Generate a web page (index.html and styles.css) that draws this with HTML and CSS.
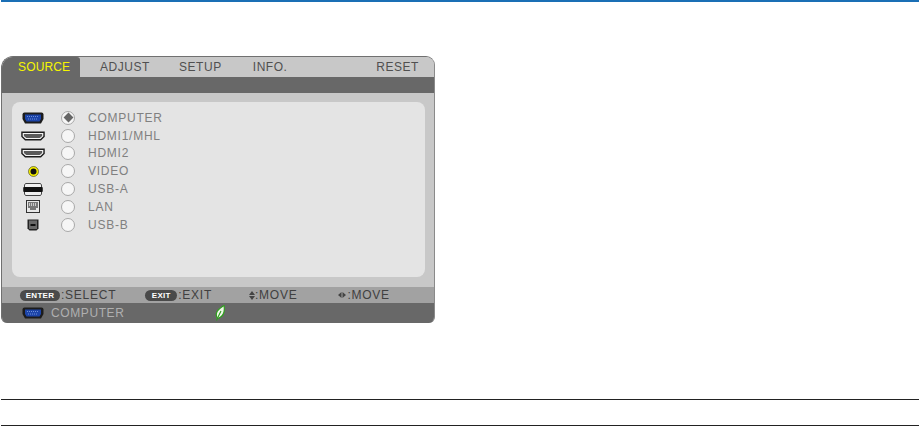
FILE: index.html
```html
<!DOCTYPE html>
<html lang="en">
<head>
  <meta charset="UTF-8" />
  <title>Source menu</title>
  <link rel="stylesheet" href="styles.css">
</head>
<body>
  <svg class="defs" width="0" height="0">
    <symbol id="vga" viewBox="0 0 22 12">
      <path d="M2.500 .5H19.500Q21.500 .5 21.500 2.500V7L19 11.500H3L.5 7V2.500Q.5 .5 2.500 .5Z" fill="#1c1c1c"/>
      <path d="M3 2.500H19V7L17.500 9.500H4.500L3 7Z" fill="#1c44a8"/>
      <path d="M5 4.500H17M6 7H16" stroke="#6f8fd8" stroke-width="1" stroke-dasharray="1 1"/>
    </symbol>
    <symbol id="hdmi" viewBox="0 0 25 10">
      <path d="M1 1H24V5.500L20.500 9H4.500L1 5.500Z" fill="#f4f4f4" stroke="#1c1c1c" stroke-width="1.500"/>
      <path d="M3 3H22V5L19.500 7H5.500L3 5Z" fill="#5a5a5a"/>
    </symbol>
  </svg>

  <div class="top-line"></div>

  <!-- Projector on-screen menu -->
  <div class="osd">
    <div class="tabs">
      <div class="tab tab-active">SOURCE</div>
      <div class="tab tab-adjust">ADJUST</div>
      <div class="tab tab-setup">SETUP</div>
      <div class="tab tab-info">INFO.</div>
      <div class="tab tab-reset">RESET</div>
    </div>
    <div class="band"></div>

    <div class="body">
      <div class="panel">
        <div class="row">
          <span class="icon"><svg class="ic-vga"><use href="#vga"/></svg></span>
          <span class="radio radio-on"></span>
          <span class="label">COMPUTER</span>
        </div>
        <div class="row">
          <span class="icon"><svg class="ic-hdmi"><use href="#hdmi"/></svg></span>
          <span class="radio"></span>
          <span class="label">HDMI1/MHL</span>
        </div>
        <div class="row">
          <span class="icon"><svg class="ic-hdmi"><use href="#hdmi"/></svg></span>
          <span class="radio"></span>
          <span class="label">HDMI2</span>
        </div>
        <div class="row">
          <span class="icon">
            <svg width="11" height="11" viewBox="0 0 11 11">
              <circle cx="5.500" cy="5.500" r="5" fill="#f4ee00" stroke="#3a3a20" stroke-width=".6"/>
              <circle cx="5.500" cy="5.500" r="3" fill="#111"/>
            </svg>
          </span>
          <span class="radio"></span>
          <span class="label">VIDEO</span>
        </div>
        <div class="row">
          <span class="icon">
            <svg width="20" height="13" viewBox="0 0 20 13">
              <path d="M2.500 .5H17.500L18.500 2V11L17.500 12.500H2.500L1.500 11V2Z" fill="#f0f0f0" stroke="#444"/>
              <path d="M1.500 4.500H.5V8.500H1.500M18.500 4.500H19.500V8.500H18.500" fill="#ddd" stroke="#444"/>
              <rect x="1" y="4" width="18" height="5" fill="#111"/>
            </svg>
          </span>
          <span class="radio"></span>
          <span class="label">USB-A</span>
        </div>
        <div class="row">
          <span class="icon">
            <svg width="14" height="13" viewBox="0 0 14 13">
              <rect x=".5" y=".5" width="13" height="12" fill="#e8e8e8" stroke="#333"/>
              <path d="M2 2H12V8H10V10H4V8H2Z" fill="#777"/>
              <path d="M3.500 3V6M5.500 3V6M7.500 3V6M9.500 3V6" stroke="#eee" stroke-width=".7"/>
            </svg>
          </span>
          <span class="radio"></span>
          <span class="label">LAN</span>
        </div>
        <div class="row">
          <span class="icon">
            <svg width="12" height="12" viewBox="0 0 12 12">
              <path d="M.5 .5H11.500V9.500L9.500 11.500H2.500L.5 9.500Z" fill="#222"/>
              <rect x="2" y="1.500" width="8" height="8.500" fill="#6a6a6a"/>
              <rect x="3.500" y="5" width="5" height="2" fill="#111"/>
            </svg>
          </span>
          <span class="radio"></span>
          <span class="label">USB-B</span>
        </div>
      </div>
    </div>

    <div class="hints">
      <span class="key key-enter">ENTER</span><span class="hint hint-select">:SELECT</span>
      <span class="key key-exit">EXIT</span><span class="hint hint-exit">:EXIT</span>
      <svg class="arrows arrows-ud" width="6" height="9" viewBox="0 0 6 9"><path d="M3 0L6 4H0ZM0 5H6L3 9Z" fill="#444"/></svg>
      <span class="hint">:MOVE</span>
      <svg class="arrows arrows-lr" width="8" height="6" viewBox="0 0 8 6"><path d="M0 3L3.500 0V6ZM4.500 0L8 3L4.500 6Z" fill="#444"/></svg>
      <span class="hint hint-last">:MOVE</span>
    </div>

    <div class="status">
      <svg class="ic-vga status-icon"><use href="#vga"/></svg>
      <span class="status-name">COMPUTER</span>
      <svg class="leaf" width="10" height="16" viewBox="0 0 10 16">
        <path d="M9 .5C10 6 8.500 11 4 13C1.500 14 1 10 1.500 8C2.500 4.500 6 2.500 9 .5Z" fill="#eef6e8" stroke="#2f9f1e" stroke-width="1.200"/>
        <path d="M6 6C4.500 9 3 12 1.500 15.500" fill="none" stroke="#2f9f1e" stroke-width="1.100"/>
      </svg>
    </div>
  </div>

  <div class="rule rule-first"></div>
  <div class="rule rule-second"></div>
</body>
</html>
```

FILE: styles.css
```css
/* Reset */
* {
  margin: 0;
  padding: 0;
  box-sizing: border-box;
}
body {
  background: #fff;
  font-family: "Liberation Sans", Arial, sans-serif;
  height: 426px;
  overflow: hidden;
}
.defs {
  display: block;
  height: 0;
}

/* Page lines */
.top-line {
  height: 2px;
  margin-left: 1px;
  background: #1a6fb5;
}
.rule {
  height: 1px;
  margin-left: 1px;
  background: #222;
}
.rule-first {
  margin-top: 76px;
}
.rule-second {
  margin-top: 25px;
}

/* On-screen menu */
.osd {
  width: 434px;
  height: 267px;
  margin: 54px 0 0 1px;
  border-radius: 12px 9px 6px 6px;
  border-left: 1px solid #707070;
  border-right: 1px solid #8a8a8a;
  border-top: 1px solid #707070;
  background: #c8c8c8;
  overflow: hidden;
  display: flex;
  flex-direction: column;
}

/* Tabs */
.tabs {
  display: flex;
  height: 20px;
  background: #c8c8c8;
}
.tab {
  font-size: 12px;
  line-height: 20px;
  letter-spacing: 0.55px;
  color: #505050;
}
.tab-active {
  width: 78px;
  padding-left: 16px;
  background: #686868;
  color: #f6f600;
  letter-spacing: 0.15px;
  border-top-right-radius: 3px;
}
.tab-adjust {
  margin-left: 20px;
}
.tab-setup {
  margin-left: 29px;
}
.tab-info {
  margin-left: 31px;
}
.tab-reset {
  margin-left: auto;
  margin-right: 15px;
}
.band {
  height: 16px;
  background: #686868;
}

/* Source list */
.body {
  height: 194px;
  padding: 9px 9px 10px 10px;
}
.panel {
  height: 175px;
  padding: 7px 0 0 9px;
  background: #e4e4e4;
  border-radius: 8px;
}
.row {
  display: flex;
  align-items: center;
  height: 17.8px;
}
.icon {
  width: 24px;
  display: flex;
  justify-content: center;
  align-items: center;
}
.ic-vga {
  width: 22px;
  height: 12px;
}
.ic-hdmi {
  width: 25px;
  height: 10px;
}
.radio {
  width: 14px;
  height: 14px;
  margin-left: 16px;
  background: #f6f6f6;
  border: 1px solid #a8a8a8;
  border-radius: 50%;
  position: relative;
}
.radio-on::after {
  content: "";
  position: absolute;
  left: 2.500px;
  top: 2.500px;
  width: 7px;
  height: 7px;
  background: #666;
  transform: rotate(45deg);
}
.label {
  margin-left: 13px;
  font-size: 12px;
  letter-spacing: 0.75px;
  color: #808080;
}

/* Key hints */
.hints {
  height: 16px;
  display: flex;
  align-items: center;
  padding-left: 18px;
  background: #a2a2a2;
}
.key {
  height: 11px;
  border-radius: 6px;
  background: #4a4a4a;
  color: #fff;
  font-size: 8px;
  font-weight: bold;
  line-height: 11px;
  text-align: center;
  letter-spacing: 0.3px;
}
.key-enter {
  width: 40px;
}
.key-exit {
  width: 32px;
  margin-left: 29px;
}
.hint {
  font-size: 12px;
  letter-spacing: 0.75px;
  color: #404040;
}
.hint-select {
  margin-left: 1px;
}
.hint-exit {
  margin-left: 1px;
}
.hint-last {
  margin-left: 1px;
}
.arrows-ud {
  margin-left: 37px;
}
.arrows-lr {
  margin-left: 41px;
}

/* Status bar */
.status {
  flex: 1;
  display: flex;
  align-items: center;
  padding-left: 20px;
  background: #686868;
}
.status-name {
  margin-left: 7px;
  font-size: 12px;
  letter-spacing: 0.6px;
  color: #b0b0b0;
}
.leaf {
  margin-left: 91px;
}
```
